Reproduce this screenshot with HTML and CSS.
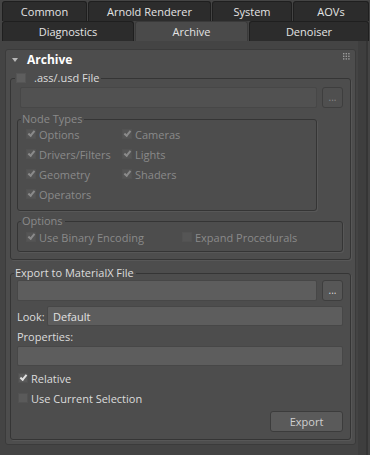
FILE: index.html
```html
<!DOCTYPE html>
<html lang="en">

<head>
    <meta charset="UTF-8">
    <title>Render Setup - Archive</title>
    <link rel="stylesheet" href="styles.css">
</head>

<body>
    <!-- tab strip, two rows -->
    <div class="tabs">
        <div class="tab-row">
            <div class="tab w-common">Common</div>
            <div class="tab w-arnold">Arnold Renderer</div>
            <div class="tab w-system">System</div>
            <div class="tab w-aovs">AOVs</div>
        </div>
        <div class="tab-row">
            <div class="tab w-diag">Diagnostics</div>
            <div class="tab w-archive active">Archive</div>
            <div class="tab w-denoiser">Denoiser</div>
        </div>
    </div>

    <div class="main">
        <div class="rollout">
            <div class="rollout-head">
                <span class="arrow"></span>
                <span class="rollout-title">Archive</span>
                <svg class="grip" width="7" height="7" viewBox="0 0 7 7">
                    <g fill="#9c9c9c">
                        <rect x="0" y="0" width="1.4" height="1.4"/><rect x="2.6" y="0" width="1.4" height="1.4"/><rect x="5.2" y="0" width="1.4" height="1.4"/>
                        <rect x="0" y="2.6" width="1.4" height="1.4"/><rect x="2.6" y="2.6" width="1.4" height="1.4"/><rect x="5.2" y="2.6" width="1.4" height="1.4"/>
                        <rect x="0" y="5.2" width="1.4" height="1.4"/><rect x="2.6" y="5.2" width="1.4" height="1.4"/><rect x="5.2" y="5.2" width="1.4" height="1.4"/>
                    </g>
                </svg>
            </div>

            <!-- .ass/.usd export -->
            <fieldset class="group first-group">
                <legend><span class="check big"></span><span class="label">.ass/.usd File</span></legend>
                <div class="file-row indent">
                    <div class="field disabled"></div>
                    <div class="dots-btn disabled">...</div>
                </div>

                <fieldset class="group sub node-types">
                    <legend class="off">Node Types</legend>
                    <div class="check-grid">
                        <div class="opt off"><span class="check on"></span>Options</div>
                        <div class="opt off"><span class="check on"></span>Cameras</div>
                        <div class="opt off"><span class="check on"></span>Drivers/Filters</div>
                        <div class="opt off"><span class="check on"></span>Lights</div>
                        <div class="opt off"><span class="check on"></span>Geometry</div>
                        <div class="opt off"><span class="check on"></span>Shaders</div>
                        <div class="opt off"><span class="check on"></span>Operators</div>
                    </div>
                </fieldset>

                <fieldset class="group sub options">
                    <legend class="off">Options</legend>
                    <div class="opt-row">
                        <div class="opt off binary"><span class="check on"></span>Use Binary Encoding</div>
                        <div class="opt off"><span class="check"></span>Expand Procedurals</div>
                    </div>
                </fieldset>
            </fieldset>

            <!-- MaterialX export -->
            <fieldset class="group export">
                <legend class="plain">Export to MaterialX File</legend>
                <div class="file-row">
                    <div class="field"></div>
                    <div class="dots-btn">...</div>
                </div>
                <div class="look-row">
                    <span class="look-label">Look:</span>
                    <div class="field text">Default</div>
                </div>
                <div class="prop-label">Properties:</div>
                <div class="field"></div>
                <div class="opt enabled first"><span class="check on bright"></span>Relative</div>
                <div class="opt enabled"><span class="check"></span>Use Current Selection</div>
                <div class="btn-row">
                    <div class="btn">Export</div>
                </div>
            </fieldset>
        </div>
        <div class="scroll-track"></div>
    </div>
</body>

</html>
```

FILE: styles.css
```css
/* 3ds Max dark theme */
body {
    margin: 0;
    background-color: #444444;
    font-family: "Open Sans", "Noto Sans", sans-serif;
    font-size: 11px;
    color: #dcdcdc;
    width: 370px;
    height: 455px;
    overflow: hidden;
}

/* tabs */
.tabs {
    padding: 1px 0 0 2px;
}

.tab-row {
    display: flex;
    gap: 1px;
    height: 20px;
}

.tab {
    box-sizing: border-box;
    height: 20px;
    background-color: #2c2c2c;
    border: 1px solid #1f1f1f;
    border-bottom: none;
    border-radius: 3px 3px 0 0;
    text-align: center;
    line-height: 19px;
    font-size: 11px;
    color: #e4e4e4;
}

.tab.active {
    background-color: #4a4a4a;
    border-color: #3a3a3a;
}

.w-common { width: 85px; }
.w-arnold { width: 123px; }
.w-system { width: 80px; }
.w-aovs { width: 76px; }
.w-diag { width: 132px; }
.w-archive { width: 113px; }
.w-denoiser { width: 120px; }

/* main area */
.main {
    display: flex;
    padding-top: 8px;
}

.rollout {
    box-sizing: border-box;
    width: 351px;
    height: 396px;
    margin-left: 5px;
    background-color: #4d4d4d;
    border: 1px solid #3b3b3b;
    border-radius: 3px;
    padding: 0 4px;
}

.scroll-track {
    width: 8px;
    height: 414px;
    margin: -8px 0 0 2px;
    background-color: #3e3e3e;
    border-right: 2px solid #353535;
}

.rollout-head {
    display: flex;
    align-items: center;
    height: 19px;
    margin-bottom: 2px;
}

.arrow {
    width: 0;
    height: 0;
    border-left: 3px solid transparent;
    border-right: 3px solid transparent;
    border-top: 4px solid #b8b8b8;
    margin: 1px 9px 0 2px;
}

.rollout-title {
    font-weight: bold;
    font-size: 12px;
    color: #ffffff;
    flex: 1;
}

.grip {
    margin-right: 1px;
    margin-top: -6px;
}

/* group boxes */
.group {
    margin: 0;
    padding: 2px 7px 7px 6px;
    border: 1px solid #353535;
    border-radius: 3px;
    box-shadow: 1px 1px 0 #575757;
}

.group legend {
    display: flex;
    align-items: center;
    height: 14px;
    padding: 0 2px 0 1px;
    margin-left: -3px;
    line-height: 14px;
}

.first-group legend {
    margin-left: -2px;
}

.group legend .label {
    margin-left: 5px;
}

.group.sub {
    padding: 0 6px 4px 8px;
}

.group.sub legend {
    margin-left: -5px;
}

.node-types {
    width: 284px;
    margin-top: 4px;
}

.group.sub.node-types {
    padding-bottom: 6px;
}

.options {
    margin-top: 3px;
}

.export {
    margin-top: 6px;
}

.group.export {
    padding-top: 0;
}

.off {
    color: #8a8a8a;
}

/* fields */
.file-row {
    display: flex;
    gap: 5px;
    height: 21px;
}

.file-row.indent {
    margin-left: 3px;
}

.field {
    box-sizing: border-box;
    flex: 1;
    height: 21px;
    background-color: #5d5d5d;
    border: 1px solid #474747;
    border-radius: 2px;
}

.field.disabled {
    background-color: #515151;
}

.field.text {
    line-height: 19px;
    padding-left: 5px;
    color: #e2e2e2;
}

.dots-btn {
    box-sizing: border-box;
    width: 21px;
    height: 21px;
    background-color: #575757;
    border: 1px solid #3e3e3e;
    border-radius: 3px;
    text-align: center;
    line-height: 18px;
    color: #dcdcdc;
    font-size: 10px;
}

.dots-btn.disabled {
    background-color: #4f4f4f;
    color: #888888;
}

.look-row {
    display: flex;
    align-items: center;
    margin-top: 5px;
}

.look-label {
    width: 30px;
}

.look-row .field {
    height: 20px;
}

.prop-label {
    height: 20px;
    line-height: 22px;
}

.export > .field {
    height: 20px;
}

/* checkboxes */
.check {
    box-sizing: border-box;
    display: inline-flex;
    align-items: center;
    justify-content: center;
    width: 10px;
    height: 10px;
    background-color: #5a5a5a;
    border: 1px solid #525252;
    margin-right: 3px;
    flex-shrink: 0;
}

.check.big {
    background-color: #5e5e5e;
    border-color: #555555;
}

.off .check {
    background-color: #555555;
}

.check.on::after {
    content: "";
    width: 5px;
    height: 2px;
    margin-top: -2px;
    border-left: 2px solid #8a8a8a;
    border-bottom: 2px solid #8a8a8a;
    transform: rotate(-50deg);
}

.check.bright::after {
    border-color: #e0e0e0;
}

.check-grid {
    display: grid;
    grid-template-columns: 96px 1fr;
    grid-auto-rows: 20px;
    margin-top: -2px;
}

.opt {
    display: flex;
    align-items: center;
    height: 20px;
}

.opt-row {
    display: flex;
    margin-top: -1px;
}

.binary {
    width: 156px;
}

.opt.enabled {
    margin-left: 1px;
}

.opt.first {
    margin-top: 2px;
}

.btn-row {
    display: flex;
    justify-content: flex-end;
    margin-top: 3px;
}

.btn {
    box-sizing: border-box;
    width: 73px;
    height: 21px;
    background-color: #5a5a5a;
    border: 1px solid #3c3c3c;
    border-radius: 3px;
    text-align: center;
    line-height: 19px;
    color: #d0d0d0;
}
```
